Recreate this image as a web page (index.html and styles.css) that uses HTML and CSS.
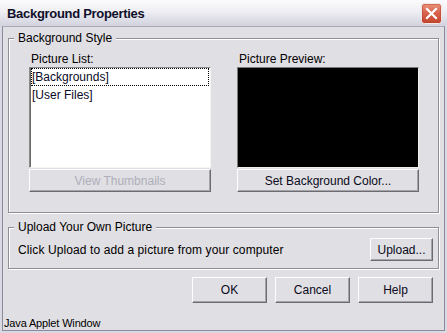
FILE: index.html
```html
<!DOCTYPE html>
<html>
<head>
<meta charset="utf-8">
<link rel="stylesheet" href="styles.css">
</head>
<body>
<div class="window">
  <div class="titlebar">
    <span class="title">Background Properties</span>
    <span class="close">
      <svg width="21" height="21" viewBox="0 0 21 21">
        <defs>
          <linearGradient id="cg" x1="0" y1="0" x2="0" y2="1">
            <stop offset="0" stop-color="#e9957f"/>
            <stop offset="0.5" stop-color="#d9604a"/>
            <stop offset="1" stop-color="#c4432c"/>
          </linearGradient>
        </defs>
        <rect x="0.5" y="0.5" width="20" height="20" rx="3" fill="url(#cg)" stroke="#f3e9e6"/>
        <rect x="1.5" y="1.5" width="18" height="18" rx="2" fill="none" stroke="#b3412c" stroke-opacity="0.5"/>
        <path d="M6 6 L15 15 M15 6 L6 15" stroke="#fff" stroke-width="2.2" stroke-linecap="square"/>
      </svg>
    </span>
  </div>
  <div class="body">
    <div class="group group-style">
      <span class="legend">Background Style</span>
      <div class="columns">
        <div class="col">
          <div class="col-label">Picture List:</div>
          <div class="listbox">
            <div class="item focused">[Backgrounds]</div>
            <div class="item">[User Files]</div>
          </div>
          <button class="btn btn-wide disabled">View Thumbnails</button>
        </div>
        <div class="col">
          <div class="col-label">Picture Preview:</div>
          <div class="preview"></div>
          <button class="btn btn-wide">Set Background Color...</button>
        </div>
      </div>
    </div>
    <div class="group group-upload">
      <span class="legend">Upload Your Own Picture</span>
      <div class="upload-row">
        <span class="hint">Click Upload to add a picture from your computer</span>
        <button class="btn btn-upload">Upload...</button>
      </div>
    </div>
    <div class="actions">
      <button class="btn btn-action">OK</button>
      <button class="btn btn-action">Cancel</button>
      <button class="btn btn-action">Help</button>
    </div>
    <div class="status">Java Applet Window</div>
  </div>
</div>
</body>
</html>
```
FILE: styles.css
```css
* {
  box-sizing: border-box;
}

html, body {
  margin: 0;
  padding: 0;
  background: #e0dfe3;
}

body {
  font-family: "Liberation Sans", Arial, sans-serif;
  font-size: 12px;
  color: #000;
}

.window {
  width: 447px;
  height: 333px;
  display: flex;
  flex-direction: column;
  background: #d9d9e3;
  padding: 0 2px 2px;
}

.titlebar {
  height: 26px;
  flex: none;
  margin: 0 -2px;
  display: flex;
  align-items: center;
  justify-content: space-between;
  padding: 0 5px 1px 7px;
  background: linear-gradient(#fbfbfd 0%, #eeeef3 45%, #dcdce6 80%, #d3d3de 100%);
}

.title {
  font-weight: bold;
  font-size: 13px;
  letter-spacing: -0.3px;
  color: #10102a;
  line-height: 16px;
  padding-top: 2px;
}

.close {
  display: flex;
  width: 21px;
  height: 21px;
  margin-top: 2px;
}

.body {
  flex: 1;
  display: flex;
  flex-direction: column;
  background: #e0dfe3;
  border: 1px solid #8b8b9b;
  border-top-color: #a8a8b6;
}

.group {
  margin: 0 5px;
  display: flex;
  flex-direction: column;
  border: 1px solid #8e8e96;
  box-shadow: inset 1px 1px 0 #fff, 1px 1px 0 #fff;
}

.group-style {
  margin-top: 11px;
  padding-bottom: 20px;
}

.group-upload {
  margin-top: 14px;
  padding-bottom: 7px;
}

.legend {
  align-self: flex-start;
  margin: -8px 0 0 5px;
  padding: 0 4px;
  line-height: 14px;
  height: 14px;
  background: #e0dfe3;
}

.columns {
  display: flex;
  gap: 26px;
  margin-top: 7px;
  padding: 0 18px 0 20px;
}

.col {
  width: 182px;
  display: flex;
  flex-direction: column;
}

.col-label {
  line-height: 14px;
  height: 14px;
  padding-left: 2px;
  margin-bottom: 1px;
}

.listbox {
  height: 101px;
  background: #fff;
  border: 1px solid;
  border-color: #8a8a8a #f6f6f0 #f6f6f0 #8a8a8a;
  box-shadow: inset 1px 0 0 #6a6a6a;
  padding: 0 1px 0 1px;
}

.item {
  height: 18px;
  line-height: 16px;
  border: 1px solid transparent;
  padding-left: 0;
  white-space: nowrap;
  color: #0a0a28;
}

.item.focused {
  border: 1px dotted #000;
}

.preview {
  height: 101px;
  background: #000;
  border: 1px solid;
  border-color: #7a7a7a #f0f0ea #f0f0ea #7a7a7a;
}

.btn {
  font-family: "Liberation Sans", Arial, sans-serif;
  font-size: 12px;
  color: #0a0a20;
  background: #e0dfe3;
  border: 1px solid;
  border-color: #fdfdfd #6c6c70 #6c6c70 #fdfdfd;
  box-shadow: inset -1px -1px 0 #a4a4aa;
  padding: 0;
  margin: 0;
  line-height: 14px;
}

.btn-wide {
  height: 23px;
  margin-top: 1px;
  width: 182px;
}

.btn.disabled {
  color: #aeaebb;
}

.upload-row {
  display: flex;
  align-items: center;
  justify-content: space-between;
  margin-top: 4px;
  padding: 0 5px 0 9px;
}

.hint {
  line-height: 14px;
  letter-spacing: 0.1px;
}

.btn-upload {
  width: 63px;
  height: 23px;
}

.actions {
  display: flex;
  justify-content: flex-end;
  gap: 8px;
  margin-top: 8px;
  padding-right: 11px;
}

.btn-action {
  width: 75px;
  height: 26px;
}

.status {
  margin-top: 13px;
  padding-left: 1px;
  font-size: 11px;
  letter-spacing: -0.15px;
  line-height: 14px;
  height: 14px;
}
```
